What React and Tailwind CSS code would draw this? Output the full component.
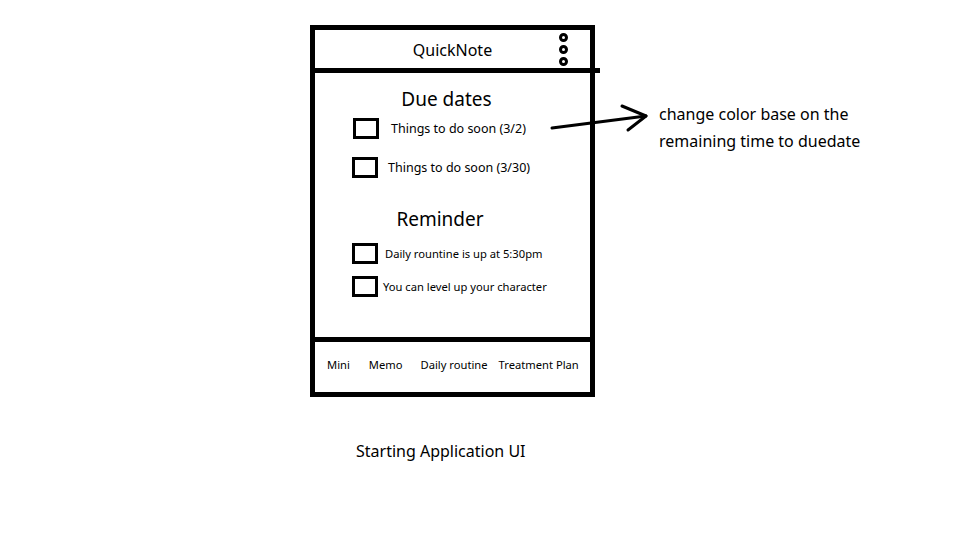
import React from 'react';

const dueItems = [
  { label: 'Things to do soon (3/2)', gap: 'ml-[12px]', box: 'ml-[38px]' },
  { label: 'Things to do soon (3/30)', gap: 'ml-[10px]', box: 'ml-[37px]' },
];

const reminders = [
  { label: 'Daily rountine is up at 5:30pm', gap: 'ml-[7px]' },
  { label: 'You can level up your character', gap: 'ml-[5px]' },
];

const tabs = [
  { label: 'Mini', gap: '' },
  { label: 'Memo', gap: 'ml-[19px]' },
  { label: 'Daily routine', gap: 'ml-[18px]' },
  { label: 'Treatment Plan', gap: 'ml-[11px]' },
];

function Box() {
  return <div className="w-[26px] h-[21px] border-[3px] border-black shrink-0" />;
}

function KebabDots() {
  return (
    <div className="absolute right-[22px] top-[3px] flex flex-col gap-[3px]">
      <div className="w-[9px] h-[9px] rounded-full border-[3px] border-black" />
      <div className="w-[9px] h-[9px] rounded-full border-[3px] border-black" />
      <div className="w-[9px] h-[9px] rounded-full border-[3px] border-black" />
    </div>
  );
}

function App() {
  return (
    <div className="relative w-[955px] h-[558px] bg-white text-black font-['Noto_Sans',sans-serif] overflow-hidden">
      <div className="flex items-start pl-[310px] pt-[25px]">
        <div className="flex flex-col">
          {/* phone frame */}
          <div className="w-[285px] h-[372px] border-[5px] border-black flex flex-col">
            <div className="relative h-[38px] shrink-0 flex items-center justify-center">
              <span className="text-[16px] leading-none mt-[2px]">QuickNote</span>
              <KebabDots />
            </div>
            <div className="h-[5px] bg-black -mr-[10px] shrink-0" />

            <div className="flex-1 flex flex-col pt-[14px]">
              <h2 className="text-[19px] leading-[24px] text-center pr-[12px]">Due dates</h2>
              <div className="flex flex-col gap-[18px] mt-[7px]">
                {dueItems.map((item) => (
                  <div key={item.label} className={`flex items-center ${item.box}`}>
                    <Box />
                    <span className={`text-[12.5px] leading-none mt-[2px] ${item.gap}`}>{item.label}</span>
                  </div>
                ))}
              </div>

              <h2 className="text-[19px] leading-[24px] text-center pr-[25px] mt-[29px]">Reminder</h2>
              <div className="flex flex-col gap-[12px] mt-[12px] pl-[37px]">
                {reminders.map((item) => (
                  <div key={item.label} className="flex items-center">
                    <Box />
                    <span className={`text-[11.2px] leading-none mt-[1px] ${item.gap}`}>{item.label}</span>
                  </div>
                ))}
              </div>
            </div>

            <div className="h-[5px] bg-black shrink-0" />
            <nav className="h-[50px] shrink-0 flex items-center pl-[12px] pb-[4px]">
              {tabs.map((t) => (
                <span key={t.label} className={`text-[11.2px] leading-none ${t.gap}`}>{t.label}</span>
              ))}
            </nav>
          </div>

          <p className="mt-[43px] ml-[46px] text-[16px] leading-[22px]">Starting Application UI</p>
        </div>

        <div className="ml-[64px] mt-[76px] text-[16px] leading-[27px]">
          <p>change color base on the</p>
          <p>remaining time to duedate</p>
        </div>
      </div>

      {/* annotation arrow */}
      <svg
        className="absolute left-[548px] top-[100px]"
        width="105"
        height="35"
        viewBox="0 0 105 35"
        fill="none"
        stroke="black"
        strokeWidth="3"
        strokeLinecap="round"
        strokeLinejoin="round"
      >
        <path d="M4 28 L98 16" />
        <path d="M74 6 L98 16 L80 30" />
      </svg>
    </div>
  );
}

export default App;
